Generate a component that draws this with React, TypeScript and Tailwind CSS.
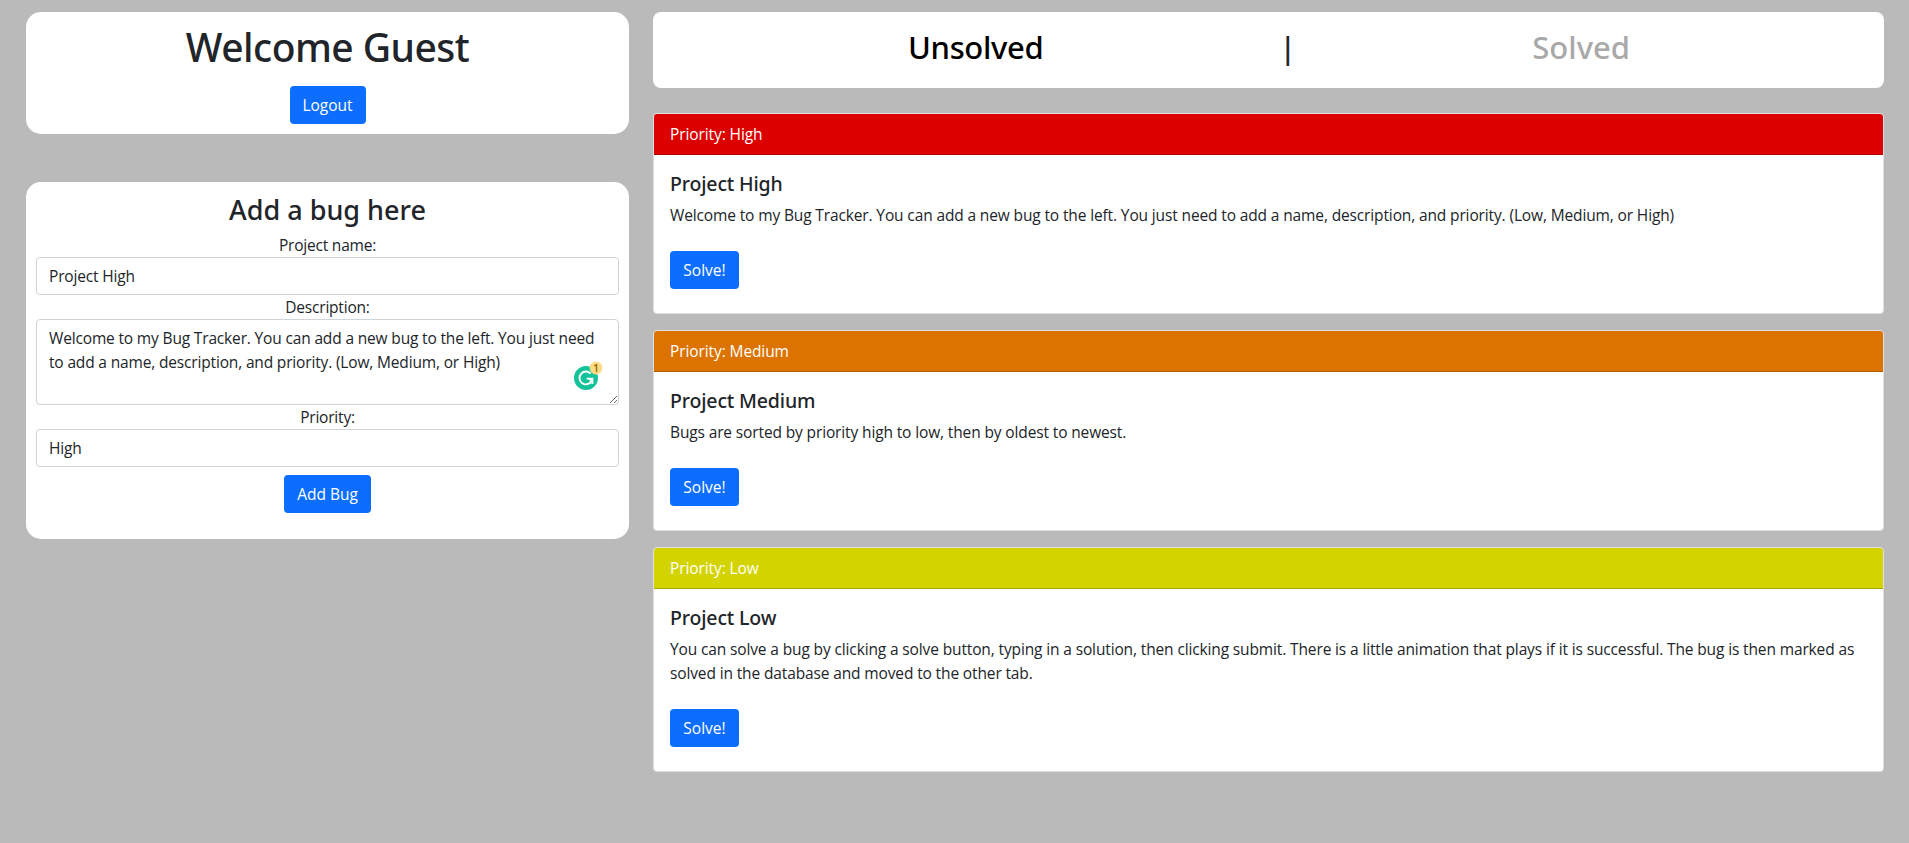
import React from "react";

type Bug = { priority: string; header: string; name: string; text: string };

const bugs: Bug[] = [
  {
    priority: "High",
    header: "bg-[#dc0000]",
    name: "Project High",
    text: "Welcome to my Bug Tracker. You can add a new bug to the left. You just need to add a name, description, and priority. (Low, Medium, or High)",
  },
  {
    priority: "Medium",
    header: "bg-[#dc7300]",
    name: "Project Medium",
    text: "Bugs are sorted by priority high to low, then by oldest to newest.",
  },
  {
    priority: "Low",
    header: "bg-[#d3d300]",
    name: "Project Low",
    text: "You can solve a bug by clicking a solve button, typing in a solution, then clicking submit. There is a little animation that plays if it is successful. The bug is then marked as solved in the database and moved to the other tab.",
  },
];

const heading = "font-['Noto_Sans',sans-serif] font-medium";
const field =
  "block w-full rounded border border-[#ced4da] bg-white px-3 py-1.5 text-[15.5px] leading-6 tracking-[-0.16px] text-[#212529] outline-none";

function Button({ children, className = "" }: { children: React.ReactNode; className?: string }) {
  return (
    <button
      className={`h-[38px] rounded bg-[#0d6efd] text-center text-[15.5px] leading-6 whitespace-nowrap text-white ${className}`}
    >
      {children}
    </button>
  );
}

function Label({ children }: { children: React.ReactNode }) {
  return <label className="block text-center tracking-[-0.2px]">{children}</label>;
}

function SuggestionBadge() {
  return (
    <svg className="absolute right-[15px] top-[41px]" width="32" height="32" viewBox="0 0 32 32">
      <circle cx="14" cy="18" r="12" fill="#15c39a" />
      <path d="M18.6 13.6A6.4 6.4 0 1 0 19.2 21.6" fill="none" stroke="#fff" strokeWidth="1.9" />
      <path d="M14.6 18.6H20.4V24" fill="none" stroke="#fff" strokeWidth="1.9" />
      <path d="M15.8 18.4H20.8V23.6Z" fill="#fff" />
      <circle cx="24" cy="8" r="6.4" fill="#fddb85" />
      <text x="24" y="11.6" textAnchor="middle" fontSize="10" fontWeight="600" fontFamily="Open Sans, sans-serif" fill="#8a6200">
        1
      </text>
    </svg>
  );
}

function BugCard({ bug }: { bug: Bug }) {
  return (
    <article className="rounded border border-[#dfdfdf] bg-white">
      <div className={`rounded-t-[3px] border-b border-black/20 px-4 py-2 tracking-[-0.1px] text-white ${bug.header}`}>
        Priority: {bug.priority}
      </div>
      <div className="px-4 pt-[17px] pb-6">
        <h5 className={`${heading} mb-[7px] text-[19.5px] leading-6 tracking-[-0.15px]`}>{bug.name}</h5>
        <p className="mb-6 tracking-[-0.132px]">{bug.text}</p>
        <Button className="w-[69px]">Solve!</Button>
      </div>
    </article>
  );
}

export default function App() {
  return (
    <main className="flex min-h-screen items-start gap-6 bg-[#bababa] pt-3 pr-[25px] pl-[26px] font-['Open_Sans',sans-serif] text-[15.5px] leading-6 text-[#212529]">
      <div className="flex w-[603px] shrink-0 flex-col gap-12">
        <section className="flex h-[122px] flex-col items-center rounded-[15px] bg-white pt-2.5">
          <h1 className={`${heading} mb-3.5 text-[39px] leading-[50px] tracking-[-0.54px]`}>Welcome Guest</h1>
          <Button className="w-[76px]">Logout</Button>
        </section>

        <section className="h-[357px] rounded-[15px] bg-white px-2.5 pt-2.5">
          <h2 className={`${heading} mb-1.5 text-center text-[27px] leading-[35px]`}>Add a bug here</h2>
          <Label>Project name:</Label>
          <input className={field} defaultValue="Project High" />
          <Label>Description:</Label>
          <div className="relative">
            <textarea
              className={field}
              rows={3}
              spellCheck={false}
              defaultValue="Welcome to my Bug Tracker. You can add a new bug to the left. You just need to add a name, description, and priority. (Low, Medium, or High)"
            />
            <SuggestionBadge />
          </div>
          <Label>Priority:</Label>
          <input className={field} defaultValue="High" />
          <div className="mt-2 flex justify-center">
            <Button className="w-[87px]">Add Bug</Button>
          </div>
        </section>
      </div>

      <div className="flex min-w-0 flex-1 flex-col">
        <nav
          className={`${heading} mb-[25px] flex h-[76px] justify-between rounded-lg bg-white pr-[254px] pl-[255px] pt-4 text-[31px] leading-[38px]`}
        >
          <span className="tracking-[-0.34px] text-black">Unsolved</span>
          <span>|</span>
          <span className="text-[#a9a9a9]">Solved</span>
        </nav>
        <div className="flex flex-col gap-4">
          {bugs.map((bug) => (
            <BugCard key={bug.priority} bug={bug} />
          ))}
        </div>
      </div>
    </main>
  );
}
